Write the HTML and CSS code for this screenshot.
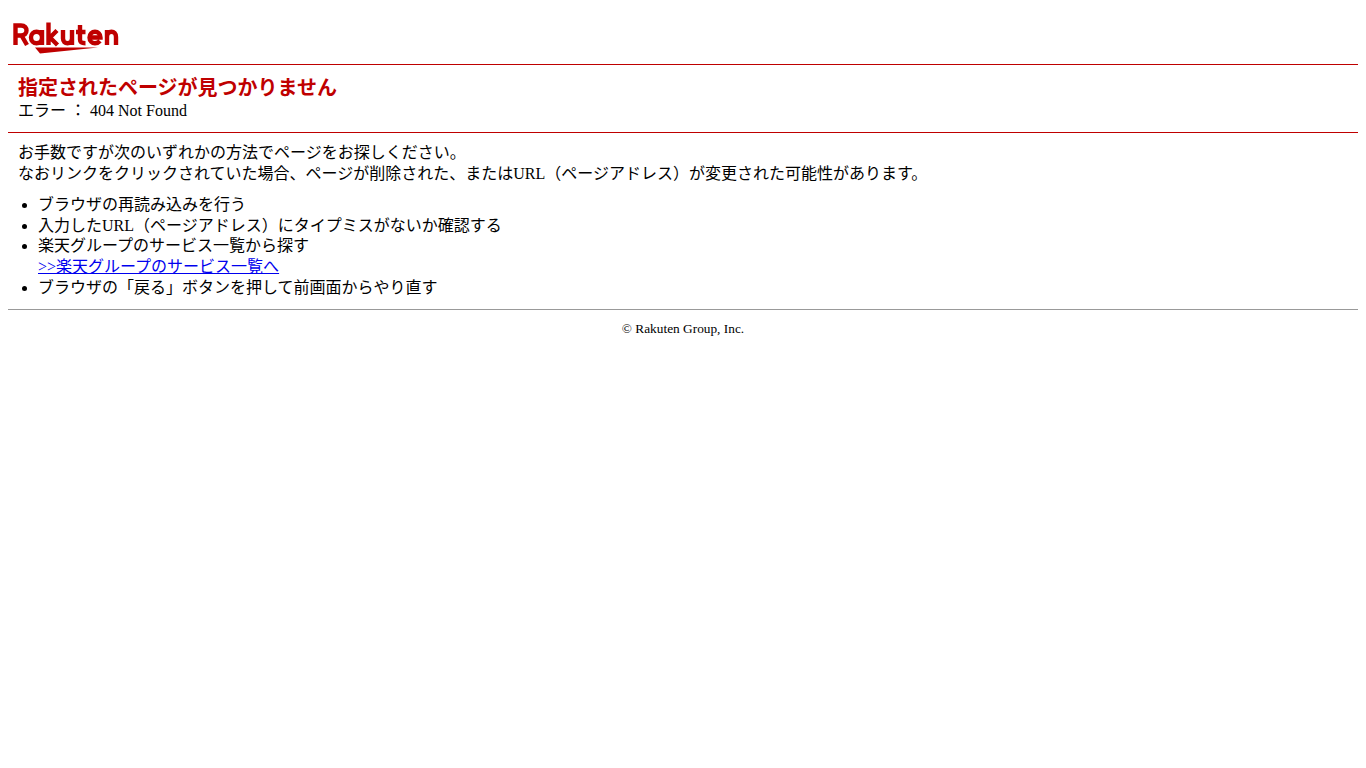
FILE: index.html
```html
<!DOCTYPE html>
<html lang="ja">
<head>
<meta charset="utf-8">
<title>指定されたページが見つかりません</title>
<link rel="stylesheet" href="styles.css">
</head>
<body>
<header class="header">
<svg class="logo" width="110" height="36" viewBox="11 20 110 36" aria-label="Rakuten">
<path class="logo-fill" d="M35 47.500 L98 47.500 L40 53.500 Z"/>
<g class="logo-stroke">
<path d="M15.500 45V25.500H21C25 25.500 26.500 28 26.500 30.500C26.500 33.500 24.500 35.500 21 35.500H15.500M21.500 35.500L27 45"/>
<path d="M42 30V45M42 37.500C42 34 39.500 31.800 36.500 31.800C33.500 31.800 31 34 31 37.500C31 41 33.500 43.200 36.500 43.200C39.500 43.200 42 41 42 37.500Z"/>
<path d="M48.500 22.500V45M57 30.500L50 37.500L57.500 45"/>
<path d="M63 30V38.500C63 41.700 65 43.200 67.500 43.200C70 43.200 72 41.700 72 38.500V30M72 38V45"/>
<path d="M80 25V39.500C80 42.500 81.500 43.200 85.500 43.200M76 32H85.500"/>
<path d="M89.500 37.500H100.500C100.500 34 98 31.800 95 31.800C92 31.800 89.500 34 89.500 37.500C89.500 41 92 43.200 95 43.200C97 43.200 98.700 42.500 100 41"/>
<path d="M107 45V30M107 37C107 33.500 109 31.800 111.500 31.800C114 31.800 116 33.500 116 37V45"/>
</g>
</svg>
</header>
<section class="section title-section">
<h1 class="title">指定されたページが見つかりません</h1>
<p class="error">エラー ： 404 Not Found</p>
</section>
<section class="section body-section">
<p class="intro">お手数ですが次のいずれかの方法でページをお探しください。<br>なおリンクをクリックされていた場合、ページが削除された、またはURL（ページアドレス）が変更された可能性があります。</p>
<ul class="list">
<li>ブラウザの再読み込みを行う</li>
<li>入力したURL（ページアドレス）にタイプミスがないか確認する</li>
<li>楽天グループのサービス一覧から探す<br><a href="#">&gt;&gt;楽天グループのサービス一覧へ</a></li>
<li>ブラウザの「戻る」ボタンを押して前画面からやり直す</li>
</ul>
</section>
<footer class="footer">© Rakuten Group, Inc.</footer>
</body>
</html>
```
FILE: styles.css
```css
html, body {
  background: #fff;
}
body {
  margin: 8px;
  color: #000;
  font-family: "Liberation Serif", "Noto Sans CJK JP", serif;
  font-size: 16px;
}
.header {
  height: 56px;
  display: flex;
  align-items: flex-end;
}
.logo {
  display: block;
  margin-left: 3px;
  margin-bottom: 8px;
}
.logo-fill {
  fill: #bf0000;
}
.logo-stroke path {
  fill: none;
  stroke: #bf0000;
  stroke-width: 4.4;
}
.section {
  border-top: 1px solid #bf0000;
  padding: 0 10px;
}
.title-section {
  height: 68px;
  padding-top: 10px;
  box-sizing: border-box;
}
.title {
  margin: 0;
  font-size: 20px;
  font-weight: bold;
  color: #bf0000;
  font-family: "Liberation Sans", "Noto Sans CJK JP", sans-serif;
  line-height: 26px;
}
.error {
  margin: 0;
  line-height: 20px;
}
.body-section {
  padding-top: 9px;
  height: 177px;
  box-sizing: border-box;
}
.intro {
  margin: 0 0 11px;
  line-height: 21px;
}
.list {
  margin: 0;
  padding-left: 20px;
  line-height: 20.7px;
}
.footer {
  border-top: 1px solid #999;
  padding-top: 10px;
  text-align: center;
  font-size: 13.33px;
  line-height: 18px;
}
```
